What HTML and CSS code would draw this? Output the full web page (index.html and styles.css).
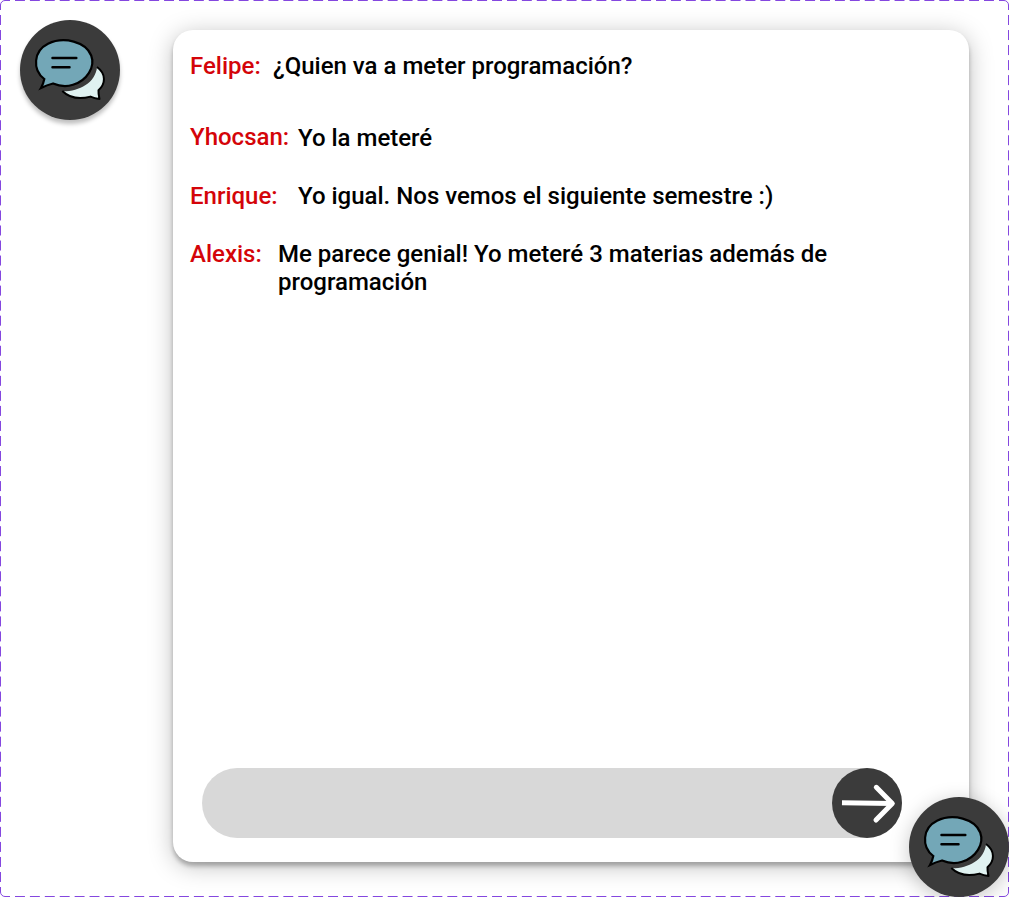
FILE: index.html
```html
<!DOCTYPE html>
<html lang="es">
<head>
<meta charset="utf-8">
<title>Chat</title>
<link rel="stylesheet" href="styles.css">
</head>
<body>
<svg class="symbols" aria-hidden="true">
  <symbol id="chat" viewBox="0 0 100 100">
    <path class="bubble-fill" d="M77 47C86.500 54 85.500 64 78.500 70.200Q78.300 74 79.500 79Q74.500 78.500 70.500 76.600C60 79.400 50 78.500 42.800 71.300C59 71.500 75.500 63 77 47Z"/>
    <path class="bubble-back" d="M77 47C86.500 54 85.500 64 78.500 70.200Q78.300 74 79.500 79Q74.500 78.500 70.500 76.600C60 79.400 50 78.500 42.300 71"/>
    <path class="bubble-front" d="M24.3 59C12 49.5 13.5 31 28 23.8C44 16 66 22 71.2 35.5C75.5 47 67 60.5 53 64.8C46.500 66.8 39 66 33 63.500Q27 65 21 68Q23.300 64 24.300 59Z"/>
    <path class="bubble-lines" d="M32.500 38H56.300M32.500 47.300H49.500"/>
  </symbol>
</svg>
<main class="frame">
  <svg class="frame-border" viewBox="0 0 1009 897" aria-hidden="true">
    <path d="M0.500 10V5A4.500 4.500 0 0 1 5 0.500H10M999 0.500H1004A4.500 4.500 0 0 1 1008.500 5V10M1008.500 887V892A4.500 4.500 0 0 1 1004 896.500H999M10 896.500H5A4.500 4.500 0 0 1 0.500 892V887"/>
    <path class="dash-x" d="M15 0.500H994M15 896.500H994"/>
    <path class="dash-y" d="M0.500 15V882M1008.500 15V882"/>
  </svg>
  <button class="chat-button" aria-label="Chat"><svg viewBox="0 0 100 100"><use href="#chat"/></svg></button>
  <section class="panel">
    <div class="messages">
      <div class="message first"><span class="author">Felipe:</span><p class="text">¿Quien va a meter programación?</p></div>
      <div class="message second"><span class="author">Yhocsan:</span><p class="text lowered">Yo la meteré</p></div>
      <div class="message third"><span class="author">Enrique:</span><p class="text">Yo igual. Nos vemos el siguiente semestre :)</p></div>
      <div class="message fourth"><span class="author">Alexis:</span><p class="text">Me parece genial! Yo meteré 3 materias además de programación</p></div>
    </div>
    <div class="composer">
      <button class="send" aria-label="Enviar"><svg viewBox="0 0 70 70"><path class="shaft" d="M10 34.700L60 35.500"/><path class="head" d="M44.300 19.300L60.300 35.500L44 52"/></svg></button>
    </div>
  </section>
  <button class="chat-button floating" aria-label="Abrir chat"><svg viewBox="0 0 100 100"><use href="#chat"/></svg></button>
</main>
</body>
</html>
```
FILE: styles.css
```css
* { box-sizing: border-box; }
body { margin: 0; background: #fff; font-family: Roboto, sans-serif; }
button { border: 0; padding: 0; display: block; }
.symbols { position: absolute; width: 0; height: 0; }
.frame {
  position: relative;
  width: 1009px;
  height: 897px;
  padding: 20px 40px 35px 20px;
  display: flex;
  gap: 53px;
  overflow: hidden;
}
.frame-border { position: absolute; inset: 0; width: 100%; height: 100%; pointer-events: none; }
.frame-border path { fill: none; stroke: #8447df; }
.dash-x { stroke-dasharray: 9.94 4.968; }
.dash-y { stroke-dasharray: 10 5.035; }
.chat-button {
  width: 100px;
  height: 100px;
  flex: none;
  border-radius: 50%;
  background: #3b3b3b;
  box-shadow: 0 4px 4px rgba(0, 0, 0, .25);
}
.chat-button svg, .send svg { display: block; width: 100%; height: 100%; }
.floating { position: absolute; right: 0; bottom: 0; box-shadow: 0 4px 20px rgba(0, 0, 0, .22); }
.bubble-back { fill: none; stroke: #000; stroke-width: 2; stroke-linejoin: round; }
.bubble-fill { fill: #e0f2f1; }
.bubble-front { fill: #73a7b7; stroke: #000; stroke-width: 2.2; stroke-linejoin: miter; }
.bubble-lines { fill: none; stroke: #000; stroke-width: 2.5; stroke-linecap: round; }
.panel {
  width: 796px;
  height: 832px;
  margin-top: 10px;
  padding: 22px 67px 24px 17px;
  border-radius: 20px;
  background: #fff;
  box-shadow: 0 4px 4px rgba(0, 0, 0, .25), 0 4px 25px rgba(0, 0, 0, .25);
  display: flex;
  flex-direction: column;
  justify-content: space-between;
}
.message {
  display: grid;
  font-size: 24px;
  font-weight: 500;
  line-height: 28px;
}
.first { grid-template-columns: 83px 1fr; margin-bottom: 43px; }
.second { grid-template-columns: 108px 1fr; margin-bottom: 30px; }
.third { grid-template-columns: 108px 1fr; margin-bottom: 30px; }
.fourth { grid-template-columns: 88px 570px; }
.author { color: #d40409; }
.text { margin: 0; color: #000; }
.lowered { padding-top: 1px; }
.composer {
  width: 700px;
  height: 70px;
  margin-left: 12px;
  border-radius: 35px;
  background: #d8d8d8;
  display: flex;
  justify-content: flex-end;
}
.send { width: 70px; height: 70px; border-radius: 50%; background: #3b3b3b; }
.shaft, .head { fill: none; stroke: #fff; stroke-width: 5; }
.head { stroke-linecap: round; stroke-linejoin: round; }
```
